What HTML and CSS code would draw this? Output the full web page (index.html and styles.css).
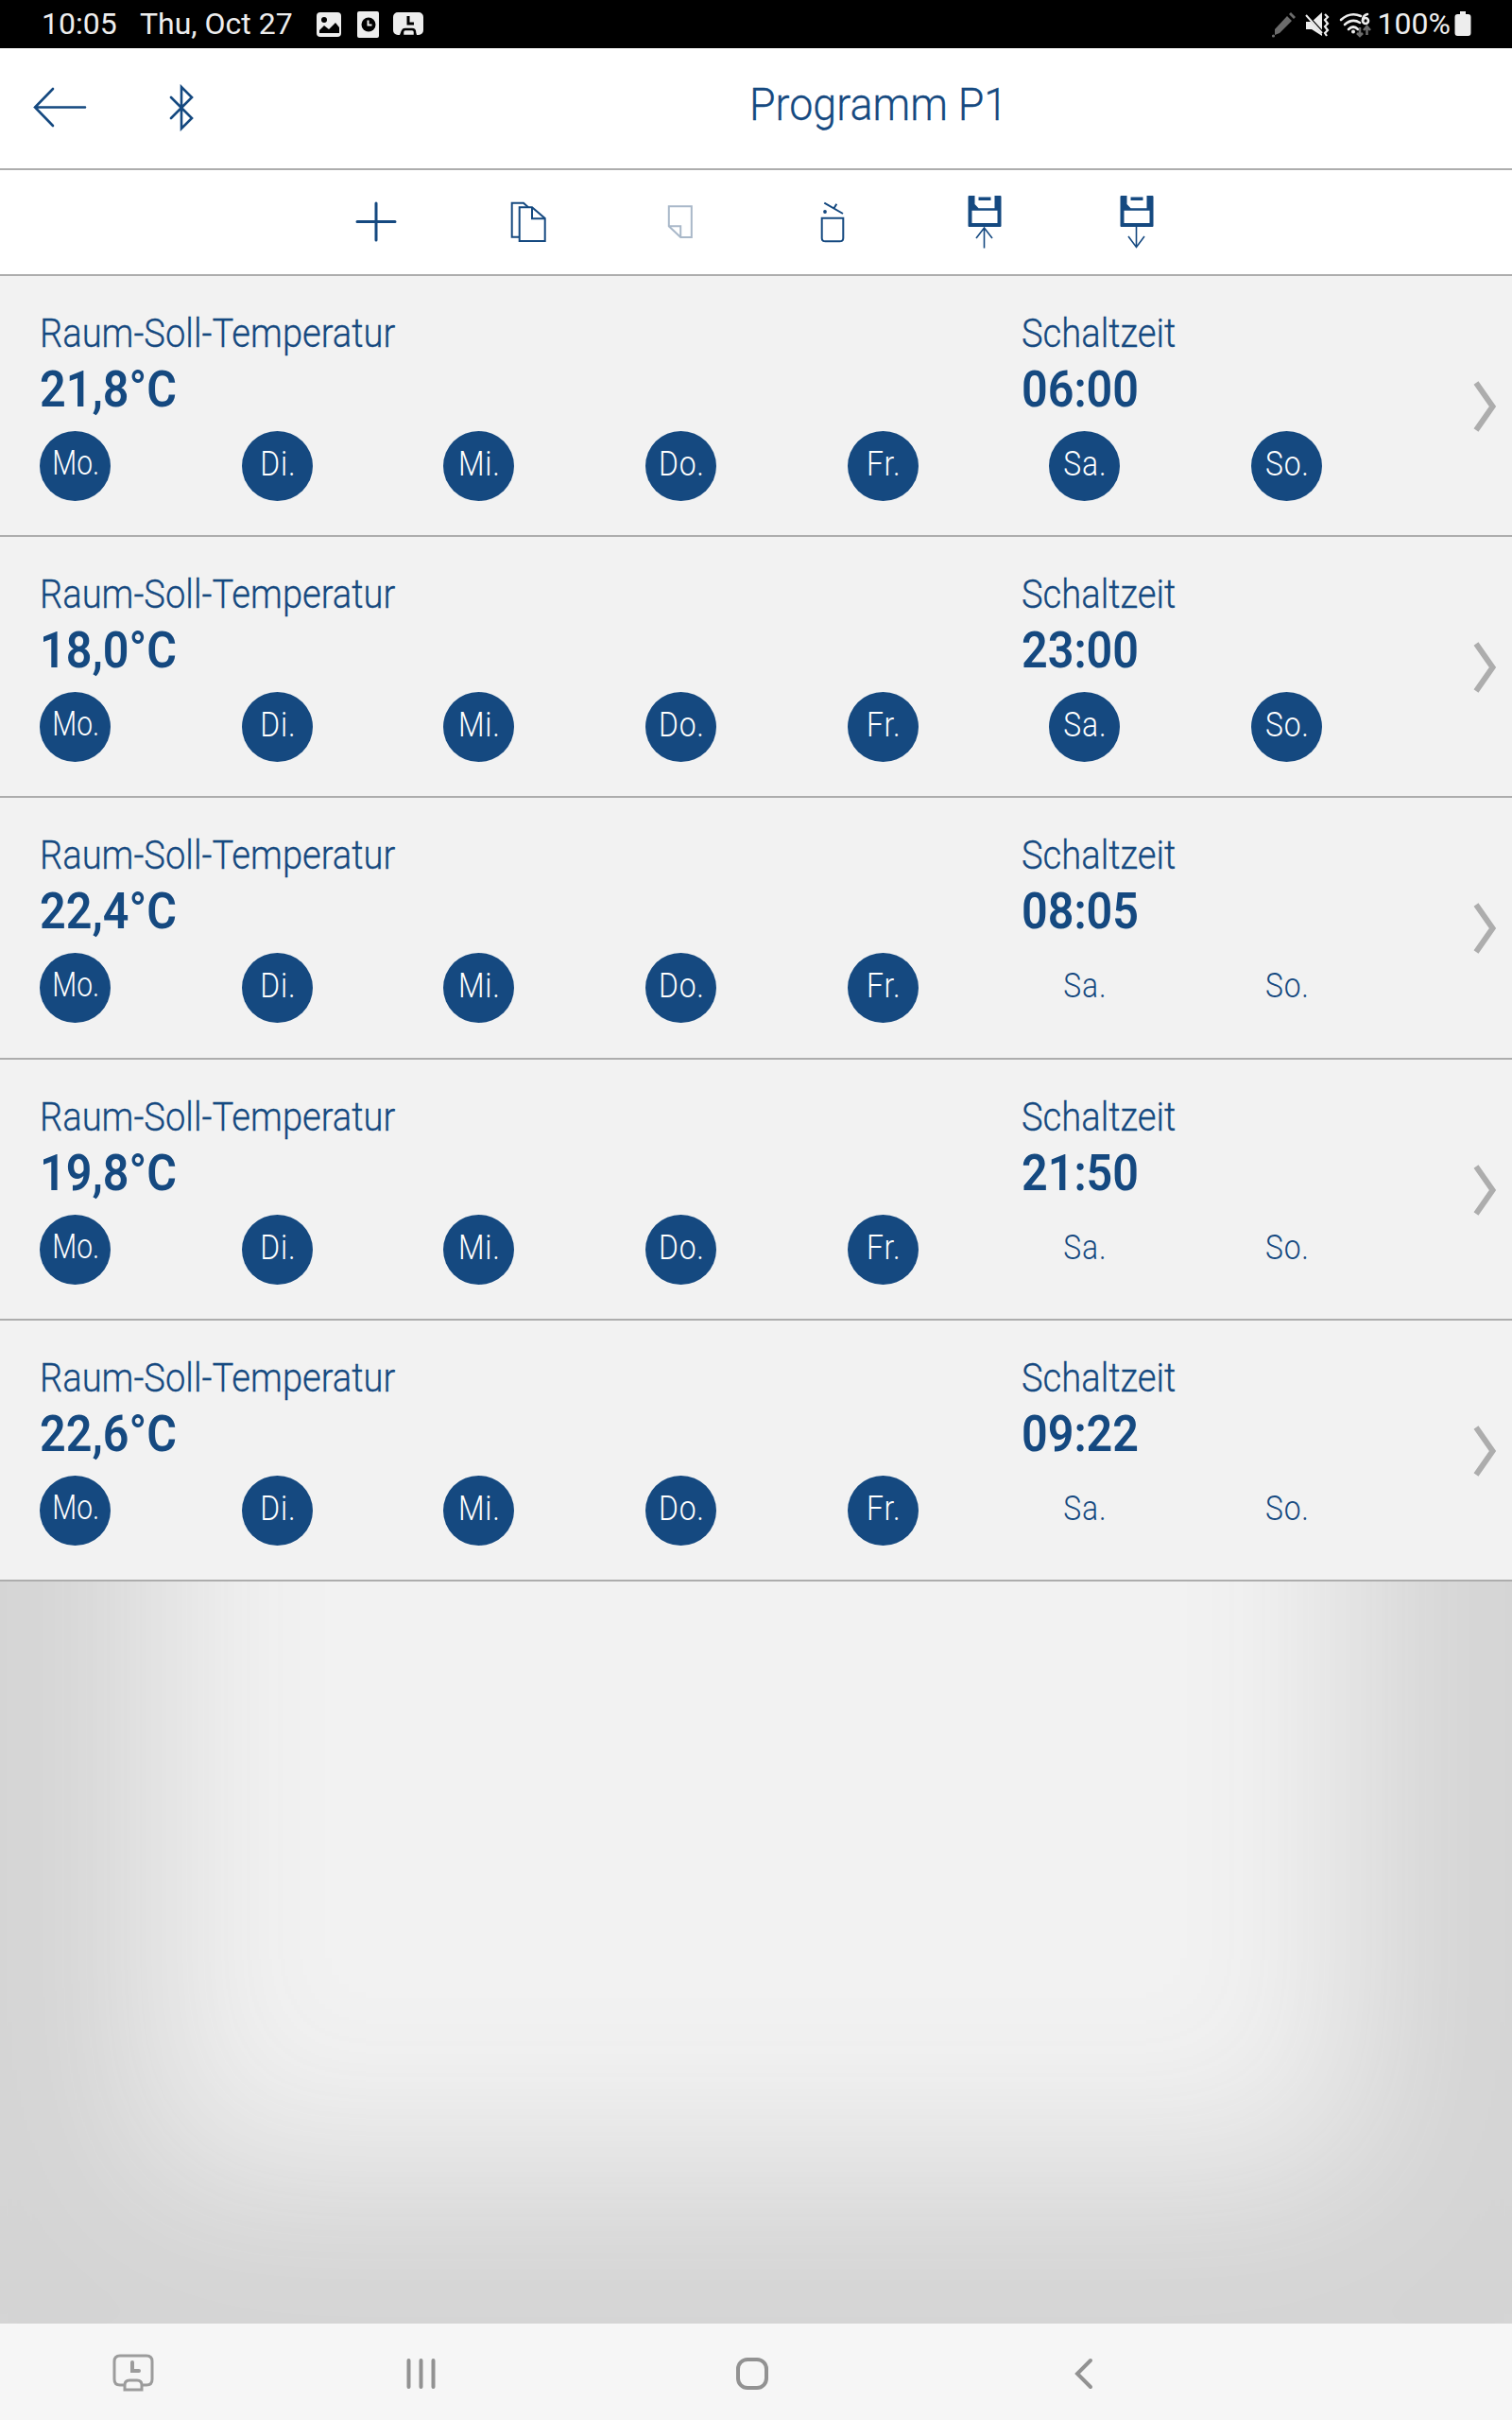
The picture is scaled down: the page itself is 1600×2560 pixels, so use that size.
FILE: index.html
```html
<!DOCTYPE html>
<html lang="de">
<head>
    <meta charset="UTF-8">
    <meta name="viewport" content="width=device-width, initial-scale=1.0">
    <title>Programm P1</title>
    <link rel="stylesheet" href="styles.css">
</head>
<body>

    <!-- Status bar -->
    <div class="status-bar">
        <span class="clock">10:05</span>
        <span class="date">Thu, Oct 27</span>
        <svg class="status-left" width="116" height="32" viewBox="0 0 116 32">
            <rect x="1" y="3" width="26" height="26" rx="4" fill="#ededed"/>
            <circle cx="9" cy="11" r="3" fill="#000"/>
            <path d="M4 22l5-5 5 4 7-7 4 5v6H4z" fill="#000"/>
            <rect x="44" y="2" width="23" height="28" rx="2" fill="#ededed"/>
            <circle cx="56" cy="16" r="7.5" fill="#000"/>
            <path d="M55.5 11.500v5h4" fill="none" stroke="#ededed" stroke-width="2"/>
            <path d="M87 3h22a5 5 0 0 1 5 5v14a5 5 0 0 1-5 5h-2l-2-5h-14l-2 5h-2a5 5 0 0 1-5-5V8a5 5 0 0 1 5-5z" fill="#ededed"/>
            <path d="M98 7v8h6" fill="none" stroke="#000" stroke-width="3"/>
            <path d="M92 28v-4q0-3 3-3h7q3 0 3 3v4z" fill="#ededed" stroke="#000" stroke-width="2.500"/>
        </svg>
        <svg class="status-right" width="110" height="32" viewBox="0 0 110 32">
            <g fill="#6c6c6c">
                <path d="M5 21L18 7l5 5L10 25l-5 2zM20 5l2-2 5 5-2 2z"/>
                <circle cx="3.500" cy="28" r="1.600"/>
            </g>
            <path d="M38 13h6l11-10v25L44 21h-6z" fill="#ededed"/>
            <path d="M37 4l20 22" stroke="#000" stroke-width="3"/>
            <path d="M38 6l17 19" stroke="#ededed" stroke-width="2"/>
            <path d="M58 5l3 3-3 3 3 4-3 3 3 4-3 3 2 3" fill="none" stroke="#ededed" stroke-width="2.200"/>
            <g fill="none" stroke="#ededed" stroke-width="2.600" stroke-linecap="round">
                <path d="M75 11q10-9 21-4"/>
                <path d="M79 16q8-7 16-2"/>
                <path d="M83 21q5-5 10 0"/>
                <path d="M103 5q-5 1-5 7"/>
                <circle cx="101" cy="12" r="3"/>
            </g>
            <circle cx="88" cy="23.500" r="2" fill="#ededed"/>
            <path d="M95 19v9m-3-3l3 3 3-3M102.500 27v-9m-3.500 4l3.500-4 3.500 4" fill="none" stroke="#6c6c6c" stroke-width="2.500"/>
        </svg>
        <span class="percent">100%</span>
        <svg class="battery" width="18" height="28" viewBox="0 0 18 28">
            <path d="M6 0h6v3h2.500a3 3 0 0 1 3 3v17a3 3 0 0 1-3 3h-11a3 3 0 0 1-3-3V6a3 3 0 0 1 3-3H6z" fill="#ededed"/>
        </svg>
    </div>

    <div class="content">
        <!-- Header -->
        <div class="header">
            <svg class="back" width="58" height="46" viewBox="0 0 58 46">
                <path d="M21 3L2 22.500 21 42M2 22.500h53"/>
            </svg>
            <svg class="bluetooth" width="28" height="50" viewBox="0 0 28 50">
                <path d="M3 14l22 22-11 11V3l11 11L3 36"/>
            </svg>
            <h1>Programm P1</h1>
        </div>

        <!-- Toolbar -->
        <div class="toolbar">
            <svg viewBox="0 0 60 80"><path class="thick" d="M30 20v39M10 39.500h40"/></svg>
            <svg viewBox="0 0 60 80">
                <path d="M20.700 55.700h-8v-36H25l5 4.500"/>
                <path d="M34 24.300H20.700V60h27V36z"/>
                <path d="M34 24.300v12h13.700"/>
            </svg>
            <svg class="disabled" viewBox="0 0 60 80">
                <path d="M17.800 23.300h24V56H30.200L17.800 44.300z"/>
                <path d="M17.800 44.300h12.400V56"/>
            </svg>
            <svg viewBox="0 0 60 80">
                <path d="M18.700 35.700h22.600v21q0 3.600-3.600 3.600H22.300q-3.600 0-3.600-3.600zM21.300 19.700L41 31M34.300 20.700L31.700 25"/>
                <circle class="solid" cx="22" cy="29" r="1.900"/>
            </svg>
            <svg viewBox="0 0 60 80">
                <path class="solid" fill-rule="evenodd" d="M13.500 12h6v9l4 4.300h17V12h6q1 0 1 1v31q0 1-1 1h-33q-1 0-1-1V13q0-1 1-1zM16.500 27.700V41h27V27.700z"/>
                <path class="solid" d="M23.500 13.500h13v3.500h-13z"/>
                <path class="thin" d="M29.500 67.500V46M21 57l8.500-11L38 57"/>
            </svg>
            <svg viewBox="0 0 60 80">
                <path class="solid" fill-rule="evenodd" d="M13.500 12h6v9l4 4.300h17V12h6q1 0 1 1v31q0 1-1 1h-33q-1 0-1-1V13q0-1 1-1zM16.500 27.700V41h27V27.700z"/>
                <path class="solid" d="M23.500 13.500h13v3.500h-13z"/>
                <path class="thin" d="M29.500 45v21.500M21 55l8.500 11.500L38 55"/>
            </svg>
        </div>

        <!-- Switching times -->
        <div class="list" id="list"></div>
    </div>

    <!-- Navigation bar -->
    <div class="nav-bar">
        <svg class="nav-panel" width="44" height="40" viewBox="0 0 44 40">
            <path d="M12 33H8q-6 0-6-6V8q0-6 6-6h28q6 0 6 6v19q0 6-6 6h-4"/>
            <path d="M13 38v-5q0-5 5-5h8q5 0 5 5v5z"/>
            <path class="hands" d="M21 9v9h7"/>
        </svg>
        <svg class="nav-recent" width="32" height="36" viewBox="0 0 32 36">
            <path d="M2.500 4v28M15.500 4v28M28.500 4v28"/>
        </svg>
        <svg class="nav-home" width="36" height="36" viewBox="0 0 36 36">
            <rect x="3" y="3" width="30" height="30" rx="10"/>
        </svg>
        <svg class="nav-back" width="22" height="36" viewBox="0 0 22 36">
            <path d="M18 4L4 18l14 14"/>
        </svg>
    </div>

    <script>
        var days = ['Mo.', 'Di.', 'Mi.', 'Do.', 'Fr.', 'Sa.', 'So.'];

        // temperature, time, number of active days (from Monday)
        var entries = [
            ['21,8°C', '06:00', 7],
            ['18,0°C', '23:00', 7],
            ['22,4°C', '08:05', 5],
            ['19,8°C', '21:50', 5],
            ['22,6°C', '09:22', 5]
        ];

        document.getElementById('list').innerHTML = entries.map(function(entry) {
            var dayItems = days.map(function(day, i) {
                return '<span class="day' + (i < entry[2] ? ' active' : '') + '"><span>' + day + '</span></span>';
            }).join('');

            return '<div class="entry">' +
                '<div class="values">' +
                '<div class="temperature"><div class="label">Raum-Soll-Temperatur</div><div class="value">' + entry[0] + '</div></div>' +
                '<div class="time"><div class="label">Schaltzeit</div><div class="value">' + entry[1] + '</div></div>' +
                '</div>' +
                '<div class="days">' + dayItems + '</div>' +
                '<svg class="chevron" width="28" height="56" viewBox="0 0 28 56"><path d="M4 3l17.500 25L4 53"/></svg>' +
                '</div>';
        }).join('');
    </script>

</body>
</html>
```
FILE: styles.css
```css
/* General Styles */
* {
    box-sizing: border-box;
}

body {
    font-family: Roboto, "Liberation Sans", sans-serif;
    background-color: #f2f2f2;
    color: #154980;
    margin: 0;
    height: 2560px;
    display: flex;
    flex-direction: column;
}

svg {
    display: block;
    flex-shrink: 0;
}

/* Status bar */
.status-bar {
    display: flex;
    align-items: center;
    height: 51px;
    padding: 0 43px 2px 44px;
    background-color: #000;
    color: #ededed;
    font-size: 32px;
    white-space: nowrap;
}

.clock {
    width: 104px;
}

.date {
    width: 186px;
}

.status-left,
.status-right,
.battery {
    margin-top: 2px;
}

.status-right {
    margin-left: auto;
}

.percent {
    margin: 0 4px 0 4px;
}

/* Content */
.content {
    flex: 1;
    box-shadow: inset 0 0 185px 165px #d4d4d4;
}

.header {
    display: flex;
    align-items: center;
    height: 129px;
    padding: 0 35px 2px;
    background-color: #fff;
    border-bottom: 2px solid #adadad;
}

.header path {
    fill: none;
    stroke: #154980;
    stroke-width: 2.6;
    stroke-linecap: round;
}

.bluetooth {
    margin-left: 85px;
}

.header h1 {
    margin: 0 0 6px 587px;
    font-size: 48px;
    line-height: 60px;
    font-weight: 300;
    -webkit-text-stroke: 0.3px #154980;
    white-space: nowrap;
    transform: scaleX(0.933);
    transform-origin: left;
}

/* Toolbar */
.toolbar {
    display: grid;
    grid-template-columns: repeat(6, 161px);
    justify-content: center;
    justify-items: center;
    align-items: center;
    height: 112px;
    background-color: #fff;
    border-bottom: 2px solid #adadad;
}

.toolbar svg {
    width: 60px;
    height: 80px;
}

.toolbar path {
    fill: none;
    stroke: #154980;
    stroke-width: 2;
}

.toolbar .thick {
    stroke-width: 3;
    stroke-linecap: round;
}

.toolbar .thin {
    stroke-width: 1.6;
}

.toolbar .solid {
    fill: #154980;
    stroke: none;
}

.toolbar .disabled path {
    stroke: #a9b8c9;
}

/* Switching times */
.entry {
    position: relative;
    height: 276.2px;
    padding: 36px 201px 0 42px;
    background-color: #f2f2f2;
    border-bottom: 2px solid #adadad;
}

.values {
    display: flex;
    height: 128px;
    white-space: nowrap;
}

.temperature {
    width: 1039px;
}

.label {
    font-size: 42px;
    line-height: 50px;
    font-weight: 300;
    -webkit-text-stroke: 0.3px #154980;
    transform: scaleX(0.908);
    transform-origin: left;
}

.value {
    margin-top: 4px;
    font-size: 53px;
    line-height: 60px;
    font-weight: 600;
    transform: scaleX(0.915);
    transform-origin: left;
}

.days {
    display: flex;
    justify-content: space-between;
}

.day {
    width: 75px;
    height: 74px;
    border-radius: 50%;
    font-size: 37px;
    line-height: 69px;
    font-weight: 300;
    text-align: center;
}

.day span {
    display: block;
    letter-spacing: 1px;
    padding-left: 2px;
    transform: scaleX(0.86);
}

.day:first-child span {
    letter-spacing: 0;
    line-height: 67px;
    transform: scaleX(0.81);
}

.active {
    background-color: #154980;
    color: #fff;
}

.chevron {
    position: absolute;
    right: 14px;
    top: 110px;
}

.chevron path {
    fill: none;
    stroke: #adadad;
    stroke-width: 6;
}

/* Navigation bar */
.nav-bar {
    display: flex;
    align-items: center;
    height: 102px;
    padding: 4px 120px 0;
    background-color: #f6f6f6;
}

.nav-bar path,
.nav-bar rect {
    fill: none;
    stroke: #929292;
    stroke-width: 4;
    stroke-linecap: round;
}

.nav-bar .nav-panel path {
    stroke-width: 3;
    stroke: #9c9c9c;
}

.nav-bar .nav-panel .hands {
    stroke-width: 4;
}

.nav-panel {
    margin: 0 0 2px -1px;
}

.nav-recent {
    margin-left: 267px;
}

.nav-home {
    margin-left: 316px;
}

.nav-back {
    margin-left: 322px;
}
```
